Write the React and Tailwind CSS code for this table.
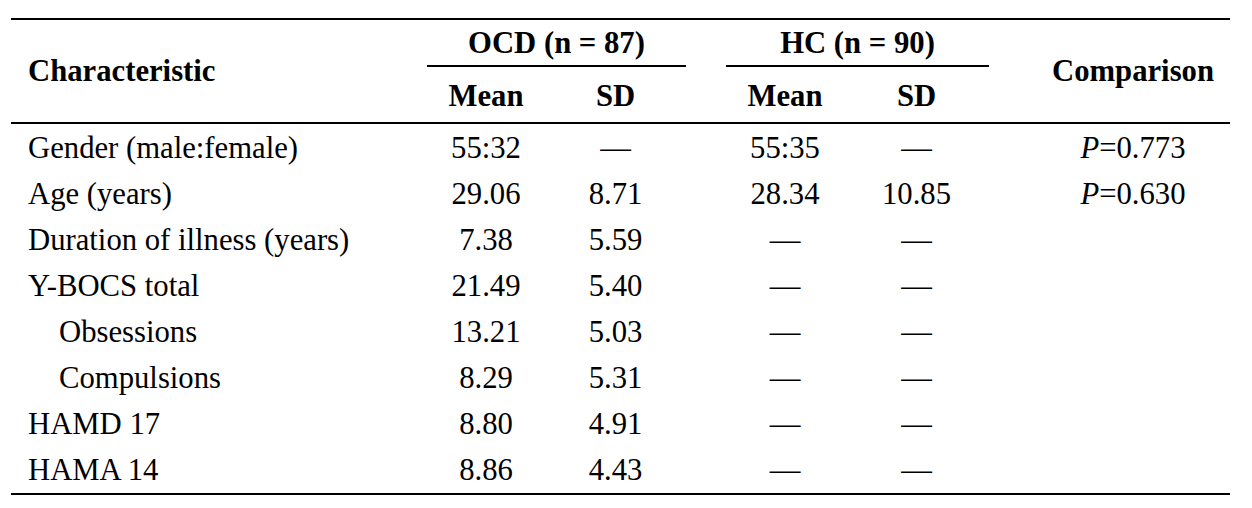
import React from 'react';

const cols = 'grid grid-cols-[416px_118px_141px_40px_118px_145px_241px]';

const rows = [
  { label: 'Gender (male:female)', ocdMean: '55:32', ocdSd: '—', hcMean: '55:35', hcSd: '—', p: '0.773' },
  { label: 'Age (years)', ocdMean: '29.06', ocdSd: '8.71', hcMean: '28.34', hcSd: '10.85', p: '0.630' },
  { label: 'Duration of illness (years)', ocdMean: '7.38', ocdSd: '5.59', hcMean: '—', hcSd: '—' },
  { label: 'Y-BOCS total', ocdMean: '21.49', ocdSd: '5.40', hcMean: '—', hcSd: '—' },
  { label: 'Obsessions', indent: true, ocdMean: '13.21', ocdSd: '5.03', hcMean: '—', hcSd: '—' },
  { label: 'Compulsions', indent: true, ocdMean: '8.29', ocdSd: '5.31', hcMean: '—', hcSd: '—' },
  { label: 'HAMD 17', ocdMean: '8.80', ocdSd: '4.91', hcMean: '—', hcSd: '—' },
  { label: 'HAMA 14', ocdMean: '8.86', ocdSd: '4.43', hcMean: '—', hcSd: '—' },
];

export default function App() {
  return (
    <div className="min-h-screen bg-white pt-[18px] pl-[11px]">
      <div className="w-[1219px] border-t-2 border-b-2 border-black font-['Liberation_Serif',serif] text-[30.7px] text-black">
        {/* header */}
        <div className={`${cols} grid-rows-[47px_55px] border-b-2 border-black font-bold`}>
          <div className="col-start-1 row-start-1 row-span-2 self-center pl-[17px] leading-[34px]">Characteristic</div>
          <div className="col-start-2 col-span-2 row-start-1 border-b-2 border-black pt-[2px] text-center leading-[43px]">OCD (n = 87)</div>
          <div className="col-start-5 col-span-2 row-start-1 border-b-2 border-black pt-[2px] text-center leading-[43px]">HC (n = 90)</div>
          <div className="col-start-7 row-start-1 row-span-2 self-center pl-[47px] text-center leading-[34px]">Comparison</div>
          <div className="col-start-2 row-start-2 pt-[12px] text-center leading-[34px]">Mean</div>
          <div className="col-start-3 row-start-2 pt-[12px] text-center leading-[34px]">SD</div>
          <div className="col-start-5 row-start-2 pt-[12px] text-center leading-[34px]">Mean</div>
          <div className="col-start-6 row-start-2 pt-[12px] text-center leading-[34px]">SD</div>
        </div>

        {/* body */}
        <div className="pt-[1px]">
          {rows.map(r => (
            <div key={r.label} className={`${cols} leading-[46px] whitespace-nowrap`}>
              <div className={r.indent ? 'pl-[48px]' : 'pl-[17px]'}>{r.label}</div>
              <div className="text-center">{r.ocdMean}</div>
              <div className="text-center">{r.ocdSd}</div>
              <div />
              <div className="text-center">{r.hcMean}</div>
              <div className="text-center">{r.hcSd}</div>
              <div className="pl-[47px] text-center">
                {r.p && (<><span className="italic">P</span>={r.p}</>)}
              </div>
            </div>
          ))}
        </div>
      </div>
    </div>
  );
}
